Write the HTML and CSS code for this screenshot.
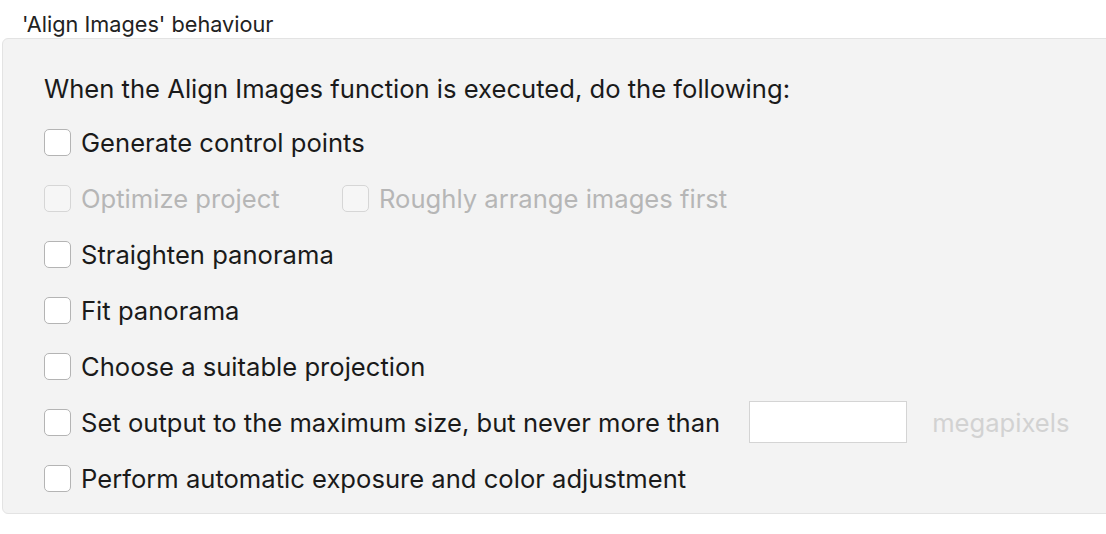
FILE: index.html
```html
<!DOCTYPE html>
<html>
<head>
<meta charset="utf-8">
<link rel="stylesheet" href="styles.css">
</head>
<body>
<div class="title">'Align Images' behaviour</div>
<div class="panel">
  <div class="intro">When the Align Images function is executed, do the following:</div>
  <div class="row"><span class="box"></span><span class="label">Generate control points</span></div>
  <div class="row disabled">
    <div class="item first"><span class="box"></span><span class="label">Optimize project</span></div>
    <div class="item"><span class="box"></span><span class="label">Roughly arrange images first</span></div>
  </div>
  <div class="row"><span class="box"></span><span class="label">Straighten panorama</span></div>
  <div class="row"><span class="box"></span><span class="label">Fit panorama</span></div>
  <div class="row"><span class="box"></span><span class="label">Choose a suitable projection</span></div>
  <div class="row"><span class="box"></span><span class="label">Set output to the maximum size, but never more than</span><span class="field"></span><span class="unit">megapixels</span></div>
  <div class="row"><span class="box"></span><span class="label">Perform automatic exposure and color adjustment</span></div>
</div>
</body>
</html>
```
FILE: styles.css
```css
html, body {
  margin: 0;
  padding: 0;
  background: #ffffff;
  overflow: hidden;
}
body {
  width: 1106px;
  height: 534px;
  font-family: "Inter", "Liberation Sans", sans-serif;
  color: #1a1a1a;
}
.title {
  font-size: 21.7px;
  line-height: 26px;
  padding: 11px 0 0 22px;
  height: 27px;
  color: #222;
}
.panel {
  margin-left: 2px;
  width: 1140px;
  height: 476px;
  box-sizing: border-box;
  background: #f3f3f3;
  border: 1px solid #e3e3e3;
  border-radius: 6px;
  padding: 34px 0 0 41px;
}
.intro {
  font-size: 25.6px;
  line-height: 32px;
  height: 41px;
}
.row {
  display: flex;
  align-items: center;
  height: 56px;
  font-size: 25.6px;
}
.item {
  display: flex;
  align-items: center;
}
.item.first {
  width: 298px;
}
.box {
  width: 27px;
  height: 27px;
  box-sizing: border-box;
  border: 1px solid #b4b4b4;
  border-radius: 5px;
  background: #ffffff;
  margin-right: 10px;
  flex: none;
}
.disabled .box {
  border-color: #d6d6d6;
  background: #f6f6f6;
}
.disabled .label {
  color: #b6b6b6;
}
.field {
  width: 158px;
  height: 42px;
  box-sizing: border-box;
  border: 1px solid #d4d4d4;
  background: #fff;
  margin-left: 29px;
}
.unit {
  color: #d2d2d2;
  margin-left: 25px;
}
```
